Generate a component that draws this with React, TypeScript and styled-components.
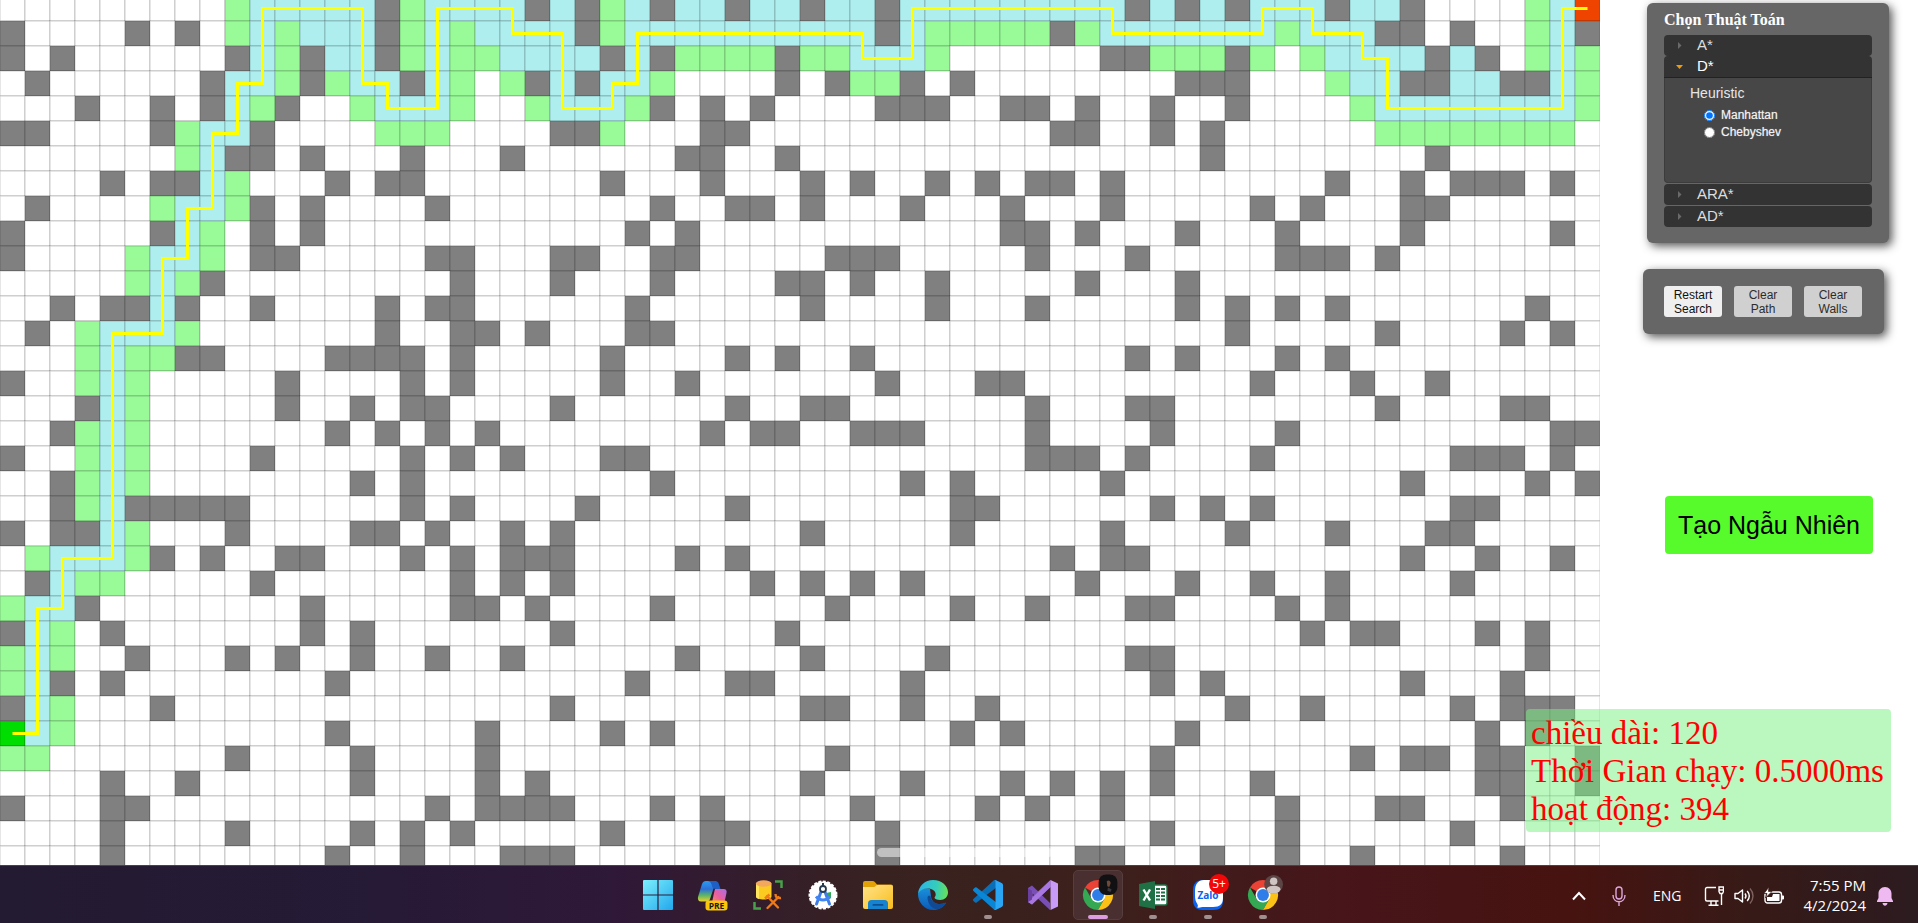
import React, { useState } from "react";
import styled, { createGlobalStyle } from "styled-components";

const GlobalStyle = createGlobalStyle`
  * { box-sizing: border-box; }
  body { margin: 0; background: #fff; font-family: "Liberation Sans", Arial, sans-serif; }
`;

/* ---------- map data ---------- */

/* "." free, "#" wall, "+" expanded, "o" in the open list, "S" start, "G" goal */
const ROWS = [
  ".........o+++++#" + "o++++#+#o+#++#++" + "#++#+++++++++#+#" + "+#+++#++#....o+G",
  "#....#.#.o+o+++#" + "o+o++++#o+++++++" + "+++#+ooooo#o++++" + "+++o+++##.#..o+#",
  "#.#......#+o#++#" + "o+oo++++#+#oooo#" + "oo+++o......##oo" + "o#o.o++++#+#.o+o",
  ".#......#++o#o++" + "#+o.o#+#++o....#" + ".#oo#.#........#" + "##...o++##++##+o",
  "...#..#.#+o#..o+" + "++o..o+++o#.#.#." + "...###..##.#..#." + ".#....o++++++++o",
  "##....#o++#....o" + "oo....##o...##.." + "..........##..#." + "#......oooooooo.",
  ".......o+##.#..." + "#...#......##..#" + "................" + "#........#......",
  "....#.##+o...#.#" + "#.......#...#..." + "#.#..#.#.##.#..." + ".....#..#.###.#.",
  ".#....o++o#.#..." + ".#........#..##." + "#...#...#...#..." + "..#.#...##......",
  "#.....#+o.#.#..." + ".........#.#...." + "........##.#...#" + "...#....#.....#.",
  "#....o++o.##...." + ".##...##..##...." + ".###.....#...#.." + "...###.#........",
  ".....o+o#......." + "..#...#...#....#" + "#.#..#.....#...#" + "................",
  "..#.##+#..#....#" + ".##......#......" + "#....#...#.....#" + ".#.#.#.......#..",
  ".#.o+++o.......#" + "..##.#...##....." + "................" + ".#.....#....#.#.",
  "...o+oo##....###" + "#.#.....#....#.#" + "..#..........#.#" + "...#.#..........",
  "#..o+o.....#...." + "#.#.....#..#...." + "...#...##......." + "..#...#..#......",
  "...#+o.....#..#." + "##....#......#.." + "##.......#...##." + ".......#....##..",
  "..#o+o.......#.#" + ".#.#........#.##" + "..###....#....#." + "...#..........##",
  "#..o+o....#....." + "#.#.#...##......" + ".........###.#.." + "..#.......###.#.",
  "..#o+o........#." + "#.........#....." + "....#.#.....#..." + "........#....#.#",
  "..#o+#####......" + "#.#....#.....#.." + "......##......#." + "#.#.......##....",
  "#.##+o...#....##" + ".#..#.#........." + "#.....#.....#..." + ".#...#...##.....",
  ".o+++o#.#..##..." + "#.#.###....#.#.." + "..........#.##.." + "........#..#..#.",
  ".#+oo.....#....." + "..#.#.#.......#." + "#.#.#......#...#" + "..#..#....#.....",
  "o++#........#..." + "..##.#....#....." + ".#....#..#...##." + "...#.#..........",
  "#+o.#.......#.#." + "......#........#" + "................" + "....#.##...#.#..",
  "o+o..#...#.#..#." + ".#..#......#...." + "#....#.......##." + ".............#..",
  "o+#.#........#.." + ".........#...##." + "....#.........#." + "#.......#...#...",
  "#+o...#........." + "......#........." + "##..#..#........" + ".#..#.....#.###.",
  "S+o..........#.." + "...#....#.#....." + "......#.#......#" + "...........#.#..",
  "oo.......#....#." + "...#............" + ".#............#." + "......#.##.##..#",
  "....#..#......#." + "...#.#.........." + "#...#...#.#.#.#." + "..#........##..#",
  "#...##.........." + ".#.####...#.#..." + "..#....#.#..#..." + "...#...##...#...",
  "....#....#....#." + "#.#.....#...##.." + "...#..........#." + "...#......#.....",
  "....#........#.." + "#...###.....#..." + "...#.......##..." + "#..#..#.....#...",
];

const FILLS: Record<string, string> = {
  ".": "#ffffff",
  "#": "#808080",
  "+": "#afeeee",
  o: "#98fb98",
  S: "#00dd00",
  G: "#ee4400",
};

const ROUTE = [
  [0, 29], [1, 29], [1, 24], [2, 24], [2, 22], [4, 22], [4, 13], [6, 13], [6, 10],
  [7, 10], [7, 8], [8, 8], [8, 5], [9, 5], [9, 3], [10, 3], [10, 0], [14, 0], [14, 3],
  [15, 3], [15, 4], [17, 4], [17, 0], [20, 0], [20, 1], [22, 1], [22, 4], [24, 4],
  [24, 3], [25, 3], [25, 1], [34, 1], [34, 2], [36, 2], [36, 0], [44, 0], [44, 1],
  [50, 1], [50, 0], [52, 0], [52, 1], [54, 1], [54, 2], [55, 2], [55, 4], [62, 4],
  [62, 0], [63, 0],
];

const CELL = 25;
const SCROLL_TOP = 4;

/* ---------- page ---------- */

const Page = styled.div`
  display: flex;
  flex-direction: column;
  height: 100vh;
  overflow: hidden;
`;

const Main = styled.main`
  position: relative;
  display: flex;
  flex: 1;
  min-height: 0;
`;

const Board = styled.section`
  flex: 1;
  min-width: 0;
  overflow: hidden;
  svg { display: block; }
`;

const Thumb = styled.div`
  position: absolute;
  left: 50%;
  bottom: 8px;
  width: 176px;
  height: 9px;
  margin-left: -82px;
  border-radius: 5px;
  background: rgba(255, 255, 255, 0.5);
`;

const Sidebar = styled.aside`
  display: flex;
  flex-direction: column;
  align-items: flex-start;
  flex: none;
  width: 318px;
  padding: 3px 29px 0 43px;
`;

const Panel = styled.section`
  border-radius: 6px;
  background: #666;
  box-shadow: 3px 3px 10px #555;
`;

const AlgorithmPanel = styled(Panel)`
  width: 242px;
  margin-left: 4px;
  padding: 8px 17px 16px;
`;

const PanelTitle = styled.h2`
  margin: 0 0 6px;
  font: bold 16px/18px "Liberation Serif", "Times New Roman", serif;
  color: #fff;
`;

const Accordion = styled.div`
  display: flex;
  flex-direction: column;
`;

const AccordionItem = styled.div<{ $open: boolean }>`
  margin-top: ${(p) => (p.$open ? "0" : "1px")};
  &:first-child { margin-top: 0; }
`;

const AccordionHead = styled.button<{ $open: boolean }>`
  display: flex;
  align-items: center;
  width: 100%;
  height: ${(p) => (p.$open ? "22px" : "21px")};
  padding: 0 12px 2px;
  border: 0;
  border-bottom: ${(p) => (p.$open ? "1px solid #222" : "0")};
  border-radius: ${(p) => (p.$open ? "4px 4px 0 0" : "4px")};
  background: #333;
  color: ${(p) => (p.$open ? "#fff" : "#ddd")};
  font: 15px/18px "Liberation Sans", Arial, sans-serif;
  text-align: left;
  svg { flex: none; margin-right: 14px; }
`;

const AccordionBody = styled.div`
  height: 105px;
  padding: 6px 25px;
  border: 1px solid #3c3c3c;
  border-top: 0;
  border-radius: 0 0 4px 4px;
  background: #474747;
`;

const Options = styled.fieldset`
  margin: 0;
  padding: 0;
  border: 0;
`;

const Legend = styled.legend`
  padding: 0;
  margin-bottom: 5px;
  font-size: 14px;
  line-height: 18px;
  color: #e6e6e6;
`;

const Option = styled.label`
  display: flex;
  align-items: center;
  gap: 6px;
  height: 17px;
  margin-left: 14px;
  font-size: 12px;
  line-height: 17px;
  color: #f2f2f2;
  text-shadow: 0 0 1px #aaa;
  input { width: 11px; height: 11px; margin: 0; }
`;

const ControlPanel = styled(Panel)`
  display: flex;
  gap: 12px;
  width: 241px;
  margin-top: 26px;
  padding: 17px 21px;
`;

const ControlButton = styled.button`
  width: 58px;
  height: 31px;
  padding: 0 6px;
  border: 0;
  border-radius: 3px;
  background: #efefef;
  color: #111;
  font: 12px/14px "Liberation Sans", Arial, sans-serif;
  &:disabled { background: #d0d0d0; color: #2c2c2c; }
`;

const RandomButton = styled.button`
  height: 58px;
  margin: 162px 0 0 22px;
  width: 208px;
  padding: 0;
  border: 0;
  border-radius: 4px;
  background: #57fb2c;
  color: #000;
  font: 25px/30px "Liberation Sans", Arial, sans-serif;
`;

const Stats = styled.output`
  position: absolute;
  right: 27px;
  bottom: 33px;
  width: 365px;
  padding: 5px 5px 4px;
  border-radius: 4px;
  background: rgba(122, 241, 129, 0.51);
  color: #f00;
  font: 33px/38px "Liberation Serif", "Times New Roman", serif;
  white-space: nowrap;
`;

const StatLine = styled.div`
  height: 38px;
`;

/* ---------- taskbar ---------- */

const Bar = styled.footer`
  display: grid;
  grid-template-columns: 1fr auto 1fr;
  flex: none;
  height: 58px;
  border-top: 1px solid #4c3f4c;
  background: linear-gradient(90deg, #231b31 0%, #261a36 20%, #2f1838 32%, #382220 46%, #3c201c 58%, #47151a 70%, #461310 82%, #371a17 91%, #2c1b20 100%);
  color: #fff;
  font-family: "Open Sans", "Segoe UI", sans-serif;
`;

const Apps = styled.nav`
  grid-column: 2;
  display: flex;
  align-items: center;
  gap: 5px;
  padding: 1px 0 0 3px;
`;

const AppButton = styled.button<{ $active?: boolean }>`
  position: relative;
  display: flex;
  align-items: center;
  justify-content: center;
  width: 50px;
  height: 50px;
  padding: 0;
  border: ${(p) => (p.$active ? "1px solid #563e3e" : "0")};
  border-radius: 5px;
  background: ${(p) => (p.$active ? "#4a2f30" : "transparent")};
  svg { display: block; overflow: visible; }
`;

const RunMark = styled.span<{ $active?: boolean }>`
  position: absolute;
  left: 50%;
  bottom: ${(p) => (p.$active ? "0" : "1px")};
  width: ${(p) => (p.$active ? "20px" : "8px")};
  height: 4px;
  border-radius: 2px;
  background: ${(p) => (p.$active ? "#dc9ee0" : "#a08f8f")};
  transform: translateX(-50%);
`;

const CountBadge = styled.span`
  position: absolute;
  top: 4px;
  right: 4px;
  width: 20px;
  height: 20px;
  border-radius: 50%;
  background: #f00808;
  color: #fff;
  font: 12px/20px "Open Sans", sans-serif;
  text-align: center;
`;

const Tray = styled.div`
  display: flex;
  align-items: center;
  justify-content: flex-end;
  padding: 2px 24px 0 0;
  svg { display: block; }
`;

const TrayButton = styled.button<{ $gap: number }>`
  padding: 0;
  margin-right: ${(p) => p.$gap}px;
  border: 0;
  background: none;
  color: inherit;
  font: 14px/20px "Open Sans", "Segoe UI", sans-serif;
`;

const Clock = styled.time`
  margin-right: 10px;
  padding-bottom: 2px;
  font-size: 15px;
  line-height: 20px;
  text-align: right;
`;

/* ---------- drawings ---------- */

const WindowsIcon = () => (
  <svg width="30" height="30" viewBox="0 0 30 30">
    <defs>
      <linearGradient id="win" x1="0" y1="0" x2="1" y2="1">
        <stop offset="0" stopColor="#7df0fd" /><stop offset="1" stopColor="#22a7ec" />
      </linearGradient>
    </defs>
    <path fill="url(#win)" d="M1 0h13.4v14.4H0V1a1 1 0 0 1 1-1zM15.6 0H29a1 1 0 0 1 1 1v13.4H15.600zM0 15.600h14.400V30H1a1 1 0 0 1-1-1zM15.600 15.600H30V29a1 1 0 0 1-1 1H15.600z" />
  </svg>
);

const CopilotIcon = () => (
  <svg width="30" height="30" viewBox="0 0 30 30">
    <defs>
      <linearGradient id="cpa" x1="0" y1="0" x2="0" y2="1">
        <stop offset="0" stopColor="#2a9df0" /><stop offset=".4" stopColor="#2e6fd8" /><stop offset=".7" stopColor="#5ab567" /><stop offset="1" stopColor="#f0d02b" />
      </linearGradient>
      <linearGradient id="cpb" x1="1" y1="0" x2="0" y2="1">
        <stop offset="0" stopColor="#a86ee8" /><stop offset=".5" stopColor="#ec5f9f" /><stop offset="1" stopColor="#f9965a" />
      </linearGradient>
    </defs>
    <path fill="url(#cpb)" d="M17 9h8.500c2.500 0 3.500 1.500 3 4L26.500 22c-.8 2-2 3-4 3h-9l2.500-12z" />
    <path fill="url(#cpa)" d="M8 1h10l-3 9-3 9c-.5 1.500-1.500 2.500-3 2.500H3c-2.500 0-3.500-2-3-4.500L4 4c.7-2 2-3 4-3z" />
    <path fill="#1d5fc4" d="M10 1h7c2.500 0 3.500 1.500 4 3.500L22.500 9H18c-2.500 0-3.500-1-4-3C13.500 3.500 12.500 1.500 10 1z" />
    <rect x="7.500" y="20.500" width="22" height="10" rx="3" fill="#fbc50b" />
    <text x="18.500" y="28.600" fontSize="8.500" fontWeight="700" fontFamily="Open Sans, sans-serif" fill="#1a1a1a" textAnchor="middle">PRE</text>
  </svg>
);

const SqlToolIcon = () => (
  <svg width="30" height="30" viewBox="0 0 30 30">
    <path d="M22 1.500h6.500V8M8 28.500H1.500V22" fill="none" stroke="#47a04a" strokeWidth="2.500" />
    <path d="M3 3.500v13c0 4 15.500 4 15.500 0v-13z" fill="#fbcb22" />
    <path d="M3 3.500v13c0 1 1.200 2 3 2.500V3z" fill="#ffe45d" />
    <ellipse cx="10.700" cy="3.500" rx="7.800" ry="3.200" fill="#f3a95d" />
    <path d="M14 16l11 11.500M25.500 17L14.500 28" stroke="#ee7a1a" strokeWidth="2.400" strokeLinecap="round" />
    <path d="M12 18.500l4.500-4M22.500 14c0 3.500 2 4.500 5.500 4" stroke="#ee7a1a" strokeWidth="2.400" fill="none" />
  </svg>
);

const AndroidStudioIcon = () => (
  <svg width="30" height="30" viewBox="0 0 30 30">
    <circle cx="15" cy="15" r="13.500" fill="#fff" stroke="#fff" strokeWidth="2" strokeDasharray="3 1.500" />
    <path d="M18 13l5-1v6l-5 3z" fill="#34a853" />
    <path d="M15 6.500L8.500 24M15 6.500L21.500 24" stroke="#3f7ee8" strokeWidth="3" strokeLinecap="round" />
    <path d="M8 16.500c4 4.500 10 4.500 14 0" stroke="#4285f4" strokeWidth="3" fill="none" />
    <circle cx="15" cy="9" r="3" fill="#fff" stroke="#263b50" strokeWidth="1.800" />
    <path d="M15 3v3" stroke="#263b50" strokeWidth="2" />
  </svg>
);

const FolderIcon = () => (
  <svg width="30" height="28" viewBox="0 0 30 28">
    <defs>
      <linearGradient id="fold" x1="0" y1="0" x2="1" y2="1">
        <stop offset="0" stopColor="#ffe38a" /><stop offset="1" stopColor="#f9bd1c" />
      </linearGradient>
    </defs>
    <path d="M0 2a2 2 0 0 1 2-2h7.500c1 0 1.700.4 2.300 1l2.200 2.500H28a2 2 0 0 1 2 2V12H0z" fill="#e3a108" />
    <path d="M0 6h10.500c1 0 1.600-.3 2.200-1L14 4h14a2 2 0 0 1 2 2v20a2 2 0 0 1-2 2H2a2 2 0 0 1-2-2z" fill="url(#fold)" />
    <path d="M5 28v-5.500A3.500 3.500 0 0 1 8.500 19h13a3.500 3.500 0 0 1 3.500 3.500V28z" fill="#1583d0" />
    <rect x="9.500" y="23" width="11" height="1.800" rx=".9" fill="#0d4f94" />
  </svg>
);

const EdgeIcon = () => (
  <svg width="30" height="30" viewBox="0 0 30 30">
    <defs>
      <linearGradient id="eda" x1="0" y1=".4" x2="1" y2=".5">
        <stop offset="0" stopColor="#2bb4e8" /><stop offset=".6" stopColor="#35cdbb" /><stop offset="1" stopColor="#68e05a" />
      </linearGradient>
      <linearGradient id="edb" x1="0" y1="0" x2="0" y2="1">
        <stop offset="0" stopColor="#1a8fdb" /><stop offset="1" stopColor="#0c5ab5" />
      </linearGradient>
    </defs>
    <path fill="url(#edb)" d="M0 14C0 22 6 30 15.500 30c5 0 9.500-2.500 12-6.300.5-.8-.2-1-.8-.7-5.700 2.500-13 .5-13.700-6.500L12 9C6 7 1 10 0 14z" />
    <path fill="#104a94" d="M9.500 17.500c0 6.500 4.500 11.800 10 11.800 3.500-1 6.200-3 8-5.600.5-.8-.2-1-.8-.7-5.700 2.500-13.500.7-14.200-7-1.800-.5-3 .2-3 1.500z" />
    <path fill="url(#eda)" d="M0 14C.5 6 7 0 15 0c9 0 15 6 15 12.500 0 4.500-3.500 7.500-7.700 7.500-3.500 0-5.800-1.200-5.800-2.300 0-.8 1.200-1.200 1.200-3.200 0-3.500-3.500-6-8-6S1.500 10.500 0 14z" />
  </svg>
);

const VsCodeIcon = () => (
  <svg width="30" height="30" viewBox="0 0 100 100">
    <path fill="#0b6fb8" d="M96.460 10.800L75.870.88a6.230 6.230 0 0 0-7.100 1.200L1.300 63.580a4.160 4.160 0 0 0 0 6.150l5.500 5a4.160 4.160 0 0 0 5.300.24L93.360 13.400A4.130 4.130 0 0 1 100 16.670z" />
    <path fill="#0a86d6" d="M96.460 89.200L75.870 99.120a6.230 6.230 0 0 1-7.100-1.210L1.300 36.420a4.160 4.160 0 0 1 0-6.150l5.500-5a4.160 4.160 0 0 1 5.300-.24l81.260 61.570A4.130 4.130 0 0 0 100 83.330z" />
    <path fill="#2aa6f4" d="M75.870 99.130a6.230 6.230 0 0 1-7.100-1.210c2.300 2.300 6.230.67 6.230-2.580V4.660c0-3.250-3.930-4.880-6.230-2.580a6.230 6.230 0 0 1 7.100-1.210l20.590 9.900A6.250 6.250 0 0 1 100 16.410v67.170a6.250 6.250 0 0 1-3.540 5.630z" />
  </svg>
);

const VisualStudioIcon = () => (
  <svg width="30" height="30" viewBox="0 0 30 30">
    <path fill="#7a4fb5" d="M0 8l4-2.500L22 23v7L4.500 13.500 4 20l-4 2z" />
    <path fill="#8a5cc8" d="M0 22l4 2.500L22.500 7V0L4.500 16.500 4 10 0 8z" />
    <path fill="#a877e0" d="M4 24.500L22.500 7V0L11 11.500 0 22z" />
    <path fill="#c79bf7" d="M22.500 0L30 3.500v23L22.500 30z" />
    <path fill="#6a3fa0" d="M0 8l4 2.500v9L0 22z" />
  </svg>
);

const ChromeBase = () => (
  <>
    <path fill="#ea4335" d="M24 24L3.200 12a24 24 0 0 1 41.600 0H24z" />
    <path fill="#34a853" d="M3.200 12L13.600 30 24 24l10.400 6L24 48A24 24 0 0 1 3.200 12z" />
    <path fill="#fbc116" d="M44.800 12H24v12l10.400 6L24 48a24 24 0 0 0 20.800-36z" />
    <circle cx="24" cy="24" r="12" fill="#fff" />
    <circle cx="24" cy="24" r="9.500" fill="#2f7de9" />
  </>
);

const ChromeIcon = ({ dark }: { dark?: boolean }) => (
  <svg width="30" height="30" viewBox="0 0 48 48">
    <ChromeBase />
    {dark ? (
      <g>
        <rect x="25" y="-9" width="30" height="33" rx="12" fill="#111113" />
        <path d="M38 2c3-3 7 0 6 4l-2 5-3-1z" fill="#6f4a38" />
        <path d="M40 12l6 3-2 4-5-2z" fill="#3a3a40" />
      </g>
    ) : (
      <g>
        <circle cx="41" cy="7" r="15" fill="#5b4545" />
        <circle cx="41" cy="2" r="6" fill="#cfc6c4" />
        <path d="M30 15c0-8 22-8 22 0-2 5-7 7-11 7s-9-2-11-7z" fill="#cfc6c4" />
      </g>
    )}
  </svg>
);

const ExcelIcon = () => (
  <svg width="28" height="28" viewBox="0 0 28 28">
    <path d="M15 4h11a2 2 0 0 1 2 2v16a2 2 0 0 1-2 2H15z" fill="#fff" stroke="#1f7145" strokeWidth="1.400" />
    <path d="M17 7h4v2h-4zM22 7h4v2h-4zM17 10.500h4v2h-4zM22 10.500h4v2h-4zM17 14h4v2h-4zM22 14h4v2h-4zM17 17.500h4v2h-4zM22 17.500h4v2h-4z" fill="#1f7145" />
    <path d="M0 3l16-3v28L0 25z" fill="#1f7145" />
    <path d="M4.500 8.500l6.500 11M11 8.500l-6.500 11" stroke="#fff" strokeWidth="2.400" />
  </svg>
);

const ZaloIcon = () => (
  <svg width="30" height="30" viewBox="0 0 30 30">
    <path d="M10 0h10c7 0 10 4 10 10v10c0 7-3 10-10 10H9C3 30 0 26 0 20V10C0 4 3 0 10 0z" fill="#0a62f0" />
    <path d="M11 0h9c7 0 10 4 10 10v8c0 6-3 9-10 9h-9c-3 0-4 1-7 .5C5.500 26 5 25 3.500 22.500 2 20 2 17 2 11 2 4 5 0 11 0z" fill="#fff" />
    <text x="15" y="19" fontSize="10" fontWeight="700" fontFamily="Open Sans, sans-serif" fill="#0a62f0" textAnchor="middle">Zalo</text>
  </svg>
);

const apps = [
  { name: "Start", icon: <WindowsIcon /> },
  { name: "Copilot", icon: <CopilotIcon /> },
  { name: "Database tools", icon: <SqlToolIcon /> },
  { name: "Android Studio", icon: <AndroidStudioIcon /> },
  { name: "File Explorer", icon: <FolderIcon /> },
  { name: "Edge", icon: <EdgeIcon /> },
  { name: "Visual Studio Code", icon: <VsCodeIcon />, running: true },
  { name: "Visual Studio", icon: <VisualStudioIcon /> },
  { name: "Chrome", icon: <ChromeIcon dark />, running: true, active: true },
  { name: "Excel", icon: <ExcelIcon />, running: true },
  { name: "Zalo", icon: <ZaloIcon />, running: true, badge: "5+" },
  { name: "Chrome, second profile", icon: <ChromeIcon />, running: true },
];

const GridMap = () => {
  const height = ROWS.length * CELL - SCROLL_TOP;
  const points = ROUTE.map(([c, r]) => `${c * CELL + CELL / 2},${r * CELL + CELL / 2}`).join(" ");
  return (
    <svg width={64 * CELL} height={height} viewBox={`0 ${SCROLL_TOP} ${64 * CELL} ${height}`}>
      <g stroke="#000" strokeOpacity=".2">
        {ROWS.map((row, r) =>
          row.split("").map((kind, c) => (
            <rect key={`${r}-${c}`} x={c * CELL} y={r * CELL} width={CELL} height={CELL} fill={FILLS[kind]} />
          ))
        )}
      </g>
      <polyline points={points} fill="none" stroke="#ff0" strokeWidth="3" />
    </svg>
  );
};

const Arrow = ({ open }: { open: boolean }) => (
  <svg width="7" height="8" viewBox="0 0 7 8">
    {open ? <path d="M0 3h7L3.500 7z" fill="#f09a0c" /> : <path d="M2 1v7L5.500 4.500z" fill="#6a6a6a" />}
  </svg>
);

const algorithms = ["A*", "D*", "ARA*", "AD*"];

export default function App() {
  const [open, setOpen] = useState("D*");
  const [heuristic, setHeuristic] = useState("Manhattan");

  return (
    <Page>
      <GlobalStyle />
      <Main>
        <Board aria-label="Map"><GridMap /></Board>
        <Sidebar>
          <AlgorithmPanel>
            <PanelTitle>Chọn Thuật Toán</PanelTitle>
            <Accordion>
              {algorithms.map((name) => (
                <AccordionItem key={name} $open={open === name}>
                  <AccordionHead type="button" $open={open === name} aria-expanded={open === name} onClick={() => setOpen(name)}>
                    <Arrow open={open === name} />
                    {name}
                  </AccordionHead>
                  {open === name && (
                    <AccordionBody>
                      <Options>
                        <Legend>Heuristic</Legend>
                        {["Manhattan", "Chebyshev"].map((h) => (
                          <Option key={h}>
                            <input type="radio" name="heuristic" checked={heuristic === h} onChange={() => setHeuristic(h)} />
                            {h}
                          </Option>
                        ))}
                      </Options>
                    </AccordionBody>
                  )}
                </AccordionItem>
              ))}
            </Accordion>
          </AlgorithmPanel>
          <ControlPanel>
            <ControlButton type="button">Restart Search</ControlButton>
            <ControlButton type="button" disabled>Clear Path</ControlButton>
            <ControlButton type="button" disabled>Clear Walls</ControlButton>
          </ControlPanel>
          <RandomButton type="button">Tạo Ngẫu Nhiên</RandomButton>
        </Sidebar>
        <Thumb />
        <Stats>
          <StatLine>chiều dài: 120</StatLine>
          <StatLine>Thời Gian chạy: 0.5000ms</StatLine>
          <StatLine>hoạt động: 394</StatLine>
        </Stats>
      </Main>
      <Bar>
        <Apps aria-label="Taskbar">
          {apps.map((a) => (
            <AppButton key={a.name} type="button" aria-label={a.name} $active={a.active}>
              {a.icon}
              {a.badge && <CountBadge>{a.badge}</CountBadge>}
              {a.running && <RunMark $active={a.active} />}
            </AppButton>
          ))}
        </Apps>
        <Tray>
          <TrayButton type="button" aria-label="Show hidden icons" $gap={26}>
            <svg width="14" height="10" viewBox="0 0 14 10"><path d="M1 8.500L7 2l6 6.500" fill="none" stroke="#fff" strokeWidth="2" /></svg>
          </TrayButton>
          <TrayButton type="button" aria-label="Microphone" $gap={27}>
            <svg width="14" height="20" viewBox="0 0 14 20" fill="none" stroke="#dda6dd" strokeWidth="1.400">
              <rect x="4" y="1" width="6" height="12" rx="3" /><path d="M1 9c0 9 12 9 12 0M7 16v4" />
            </svg>
          </TrayButton>
          <TrayButton type="button" $gap={22}>ENG</TrayButton>
          <TrayButton type="button" aria-label="Network" $gap={10}>
            <svg width="20" height="20" viewBox="0 0 20 20" fill="none" stroke="#fff" strokeWidth="1.400">
              <path d="M12 1.500H3A1.500 1.500 0 0 0 1.500 3v10.500A1.500 1.500 0 0 0 3 15h11.500M7 15v4M12 15v4M4.500 19.300h10M17.500 8v11" />
              <path d="M15 1h4.500v4.500l-1 2h-2.500l-1-2zM15 4h4.500" />
            </svg>
          </TrayButton>
          <TrayButton type="button" aria-label="Volume" $gap={10}>
            <svg width="20" height="18" viewBox="0 0 20 18" fill="none" stroke="#fff" strokeWidth="1.400">
              <path d="M1 6.500h3L8.500 3v12L4 11.500H1zM11 6.500c1.200 1.500 1.200 3.500 0 5M13.200 4c2.500 3 2.500 7 0 10" strokeLinejoin="round" />
              <path d="M16 1.500c4 4.500 4 10.500 0 15" stroke="#7d6260" />
            </svg>
          </TrayButton>
          <TrayButton type="button" aria-label="Battery" $gap={20}>
            <svg width="20" height="18" viewBox="0 0 20 18">
              <rect x="1" y="5" width="16.500" height="11" rx="2.500" fill="none" stroke="#fff" strokeWidth="1.400" />
              <path d="M9 7h6.500v7H3v-4h5zM18 8.500h1.200a.8.8 0 0 1 .8.8v2.400a.8.8 0 0 1-.8.8H18z" fill="#fff" />
              <path d="M5 0L0 6.500h3L1.500 11 8 4.500H4.500z" fill="#fff" stroke="#381a17" strokeWidth=".8" />
            </svg>
          </TrayButton>
          <Clock dateTime="2024-04-02T19:55">7:55 PM<br />4/2/2024</Clock>
          <TrayButton type="button" aria-label="Notifications" $gap={0}>
            <svg width="18" height="20" viewBox="0 0 18 20">
              <path d="M9 1c4 0 6.500 3 6.500 6.500V12l1.500 3v1H1v-1l1.500-3V7.500C2.500 4 5 1 9 1zM6.500 17h5c-.3 2-1.300 2.700-2.500 2.700S6.800 19 6.500 17z" fill="#efb9f2" />
            </svg>
          </TrayButton>
        </Tray>
      </Bar>
    </Page>
  );
}
